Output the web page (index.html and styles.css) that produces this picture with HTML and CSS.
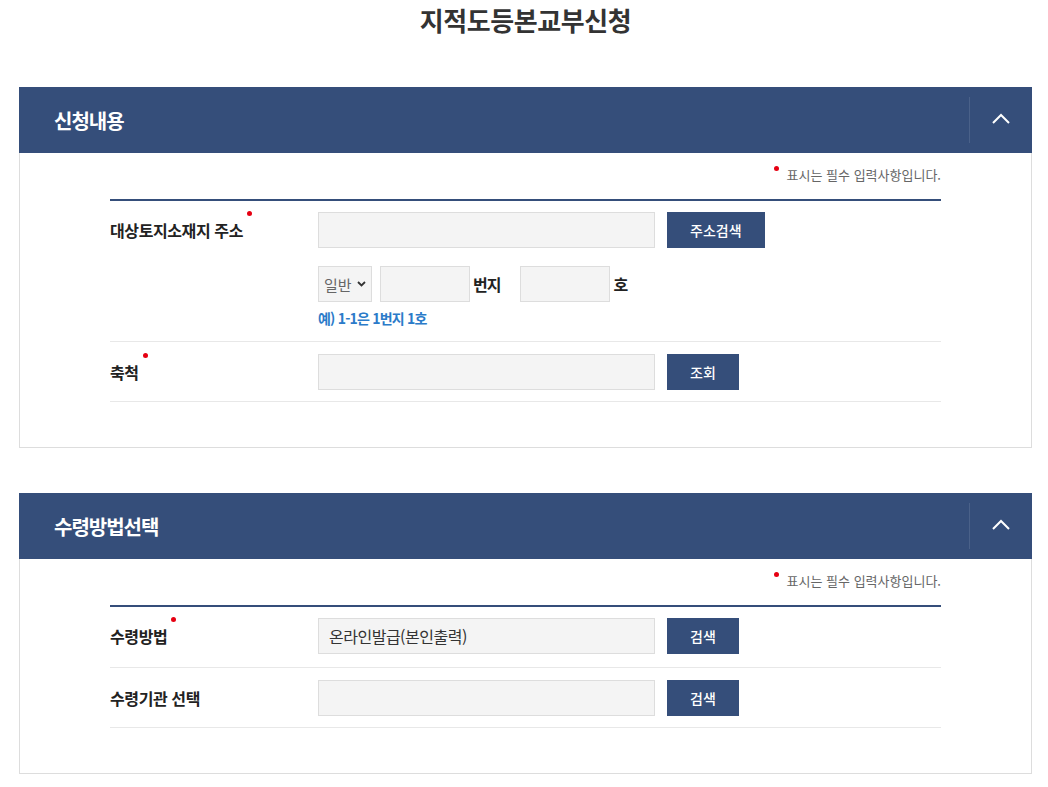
FILE: index.html
```html
<!DOCTYPE html>
<html lang="ko">

<head>
    <meta charset="UTF-8">
    <meta name="viewport" content="width=device-width, initial-scale=1.0">
    <title>지적도등본교부신청</title>
    <link rel="stylesheet" href="styles.css">
</head>

<body>
    <h1 class="page-title">지적도등본교부신청</h1>

    <!-- 신청내용 -->
    <section class="panel">
        <div class="panel-head">
            <h2>신청내용</h2>
            <button class="toggle" type="button" aria-label="접기">
                <svg width="18" height="11" viewBox="0 0 18 11"><path d="M1 10 L9 2 L17 10" fill="none" stroke="#fff" stroke-width="2"/></svg>
            </button>
        </div>
        <div class="panel-body">
            <p class="req-note"><span class="dot"></span>표시는 필수 입력사항입니다.</p>
            <div class="form-table">
                <div class="form-row">
                    <div class="form-label"><span class="req">대상토지소재지 주소</span></div>
                    <div class="form-field">
                        <div class="field-line">
                            <input type="text" class="text-input wide">
                            <button class="btn" type="button">주소검색</button>
                        </div>
                        <div class="field-line sub">
                            <div class="select-wrap">
                                <select class="select">
                                    <option>일반</option>
                                    <option>산</option>
                                </select>
                                <svg class="select-arrow" width="9" height="6" viewBox="0 0 9 6"><path d="M1 1 L4.5 4.5 L8 1" fill="none" stroke="#333" stroke-width="1.8"/></svg>
                            </div>
                            <input type="text" class="text-input short">
                            <span class="unit">번지</span>
                            <input type="text" class="text-input short">
                            <span class="unit">호</span>
                        </div>
                        <p class="hint">예) 1-1은 1번지 1호</p>
                    </div>
                </div>
                <div class="form-row">
                    <div class="form-label"><span class="req">축척</span></div>
                    <div class="form-field">
                        <div class="field-line">
                            <input type="text" class="text-input wide">
                            <button class="btn" type="button">조회</button>
                        </div>
                    </div>
                </div>
            </div>
        </div>
    </section>

    <!-- 수령방법선택 -->
    <section class="panel">
        <div class="panel-head">
            <h2>수령방법선택</h2>
            <button class="toggle" type="button" aria-label="접기">
                <svg width="18" height="11" viewBox="0 0 18 11"><path d="M1 10 L9 2 L17 10" fill="none" stroke="#fff" stroke-width="2"/></svg>
            </button>
        </div>
        <div class="panel-body">
            <p class="req-note"><span class="dot"></span>표시는 필수 입력사항입니다.</p>
            <div class="form-table">
                <div class="form-row">
                    <div class="form-label"><span class="req">수령방법</span></div>
                    <div class="form-field">
                        <div class="field-line">
                            <input type="text" class="text-input wide" value="온라인발급(본인출력)" readonly>
                            <button class="btn" type="button">검색</button>
                        </div>
                    </div>
                </div>
                <div class="form-row">
                    <div class="form-label"><span>수령기관 선택</span></div>
                    <div class="form-field">
                        <div class="field-line">
                            <input type="text" class="text-input wide" readonly>
                            <button class="btn" type="button">검색</button>
                        </div>
                    </div>
                </div>
            </div>
        </div>
    </section>
</body>

</html>
```

FILE: styles.css
```css
* {
    box-sizing: border-box;
}

body {
    font-family: "Noto Sans CJK KR", "Noto Sans", sans-serif;
    margin: 0;
    padding: 0 16px 0 19px;
    background-color: #fff;
    color: #333;
}

.page-title {
    margin: 0 0 47px;
    font-size: 26px;
    line-height: 40px;
    font-weight: 700;
    letter-spacing: -0.4px;
    text-align: center;
    color: #333;
}

.panel {
    margin-bottom: 45px;
}

.panel-head {
    display: flex;
    align-items: center;
    height: 66px;
    padding-left: 35px;
    background-color: #354e7a;
}

.panel-head h2 {
    flex: 1;
    margin: 0;
    font-size: 20px;
    font-weight: 700;
    letter-spacing: -1px;
    color: #fff;
}

.toggle {
    display: flex;
    align-items: center;
    justify-content: center;
    width: 63px;
    height: 46px;
    padding: 0 0 3px;
    border: 0;
    border-left: 1px solid #4a6189;
    background: none;
    cursor: pointer;
}

.panel-body {
    padding: 12px 90px 45px;
    border: 1px solid #ddd;
    border-top: 0;
}

.req-note {
    margin: 0 0 14px;
    font-size: 13px;
    line-height: 20px;
    letter-spacing: 0;
    color: #666;
    text-align: right;
}

.req-note .dot {
    display: inline-block;
    width: 5px;
    height: 5px;
    margin-right: 8px;
    border-radius: 50%;
    background-color: #e60012;
    vertical-align: 9px;
}

.form-table {
    border-top: 2px solid #354e7a;
}

.form-row {
    display: flex;
    padding: 12px 0 11px;
    border-bottom: 1px solid #e8e8e8;
}

.form-row:first-child {
    padding-top: 11px;
    padding-bottom: 13px;
}

.form-label {
    width: 208px;
    flex-shrink: 0;
    font-size: 16px;
    font-weight: 700;
    line-height: 36px;
    letter-spacing: -0.4px;
    color: #222;
}

.form-label span {
    position: relative;
}

.form-label .req::after {
    content: "";
    position: absolute;
    top: -7px;
    right: -9px;
    width: 5px;
    height: 5px;
    border-radius: 50%;
    background-color: #e60012;
}

.form-field {
    flex: 1;
}

.field-line {
    display: flex;
    align-items: center;
    gap: 12px;
}

.field-line.sub {
    gap: 0;
    margin-top: 18px;
}

.text-input {
    height: 36px;
    padding: 0 10px;
    border: 1px solid #ddd;
    background-color: #f4f4f4;
    font-family: inherit;
    font-size: 16px;
    letter-spacing: -0.5px;
    color: #333;
}

.text-input.wide {
    width: 337px;
}

.text-input.short {
    width: 90px;
}

.select-wrap {
    position: relative;
    margin-right: 8px;
}

.select {
    display: block;
    width: 54px;
    height: 36px;
    padding: 0 0 0 5px;
    border: 1px solid #ddd;
    background-color: #f4f4f4;
    font-family: inherit;
    font-size: 15px;
    color: #666;
    appearance: none;
    -webkit-appearance: none;
}

.select-arrow {
    position: absolute;
    top: 15px;
    right: 6px;
    pointer-events: none;
}

.unit {
    margin: 0 20px 0 3px;
    font-size: 16px;
    font-weight: 700;
    letter-spacing: -1px;
    color: #222;
}

.unit:last-child {
    margin-right: 0;
}

.btn {
    height: 36px;
    padding: 0 23px;
    border: 0;
    background-color: #354e7a;
    font-family: inherit;
    font-size: 14px;
    font-weight: 500;
    letter-spacing: 0;
    color: #fff;
    cursor: pointer;
}

.hint {
    margin: 6px 0 0;
    font-size: 14px;
    font-weight: 700;
    line-height: 20px;
    letter-spacing: -0.8px;
    color: #2b7bc9;
}
```
